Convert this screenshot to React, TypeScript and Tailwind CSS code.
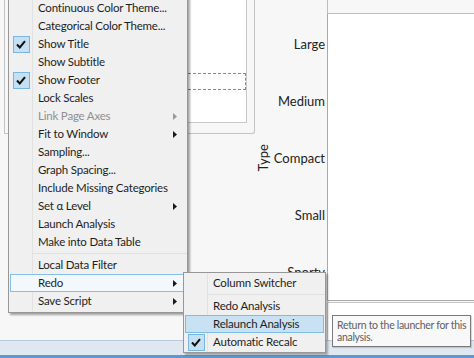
import React from "react";

type Item = {
  label?: string;
  checked?: boolean;
  disabled?: boolean;
  arrow?: boolean;
  hover?: boolean;
  sep?: boolean;
};

const mainItems: Item[] = [
  { label: "Continuous Color Theme..." },
  { label: "Categorical Color Theme..." },
  { label: "Show Title", checked: true },
  { label: "Show Subtitle" },
  { label: "Show Footer", checked: true },
  { label: "Lock Scales" },
  { label: "Link Page Axes", disabled: true, arrow: true },
  { label: "Fit to Window", arrow: true },
  { label: "Sampling..." },
  { label: "Graph Spacing..." },
  { label: "Include Missing Categories" },
  { label: "Set α Level", arrow: true },
  { label: "Launch Analysis" },
  { label: "Make into Data Table" },
  { sep: true },
  { label: "Local Data Filter" },
  { label: "Redo", arrow: true, hover: true },
  { label: "Save Script", arrow: true },
];

const subItems: Item[] = [
  { label: "Column Switcher" },
  { sep: true },
  { label: "Redo Analysis" },
  { label: "Relaunch Analysis", hover: true },
  { label: "Automatic Recalc", checked: true },
];

const categories = ["Large", "Medium", "Compact", "Small", "Sporty"];

function Check() {
  return (
    <svg width="10" height="9" viewBox="0 0 10 9">
      <path d="M1 4.5 L3.8 7.5 L9 1.2" fill="none" stroke="#111" strokeWidth="2" />
    </svg>
  );
}

function Arrow({ dim }: { dim?: boolean }) {
  return (
    <svg width="4" height="7" viewBox="0 0 4 7" className="absolute right-[8px] top-[5px]">
      <path d="M0 0 L4 3.5 L0 7 Z" fill={dim ? "#9a9a9a" : "#1a1a1a"} />
    </svg>
  );
}

function MenuRow({ item, mx }: { item: Item; mx: boolean }) {
  if (item.sep) {
    return (
      <div className="flex h-[5px] items-center pl-[24px]">
        <div className="h-px w-full bg-[#e0e0e0]" />
      </div>
    );
  }
  const hoverCls = item.hover
    ? mx
      ? "border border-[#86c0e8] bg-[#f3f8fc]"
      : "border border-[#7dbce6] bg-[#c8e2f3]"
    : "border border-transparent";
  return (
    <div className={`relative mx-[1px] flex h-[18px] items-center ${hoverCls}`}>
      <div className="flex h-full w-[20px] shrink-0 items-center justify-center">
        {item.checked && (
          <div className="flex h-[17px] w-[17px] items-center justify-center border border-[#79b6e4] bg-[#c4e0f2]">
            <Check />
          </div>
        )}
      </div>
      <span
        className={`pl-[7px] text-[11.5px] leading-none tracking-[-0.2px] whitespace-nowrap ${
          item.disabled ? "text-[#8f8f8f]" : "text-[#1e1e1e]"
        }`}
      >
        {item.label}
      </span>
      {item.arrow && <Arrow dim={item.disabled} />}
    </div>
  );
}

export default function App() {
  return (
    <div
      className="relative h-[358px] w-[474px] overflow-hidden bg-[#f7f7f7]"
      style={{ fontFamily: "Lato, 'Noto Sans', sans-serif" }}
    >
      {/* background report */}
      <div className="flex h-[340px]">
        <div className="flex w-[327px]">
          <div className="w-[255px] pl-[4px]">
            <div className="h-[134px] rounded-br-[3px] border-r border-b border-l border-[#c4c4c4] pr-[7px] pb-[10px] pl-[3px]">
              <div className="h-full border-r border-b border-[#c8c8c8] bg-white pt-[73px]">
                <div className="h-[17px] border border-dashed border-[#8a8a8a]" />
              </div>
            </div>
          </div>
          <div className="flex w-[72px] flex-col pt-[15px]">
            <div className="flex h-[285px]">
              <div className="flex w-[18px] items-center justify-center">
                <span className="-rotate-90 text-[13px] whitespace-nowrap text-[#222]">Type</span>
              </div>
              <div className="flex flex-1 flex-col pr-[2px]">
                {categories.map((c) => (
                  <div key={c} className="flex flex-1 items-center justify-end pt-[3px]">
                    <span className="text-[13px] whitespace-nowrap text-[#222]">{c}</span>
                  </div>
                ))}
              </div>
            </div>
          </div>
        </div>
        <div className="flex flex-1 flex-col">
          <div className="h-[14px] border-b border-l border-[#bdbdbd]" />
          <div className="h-[287px] border-b border-l border-[#a9a9a9] bg-white" />
          <div className="mt-[1px] flex-1 border-t border-l border-[#c8c8c8] bg-white" />
        </div>
      </div>
      <div className="h-[18px] border-t border-[#b9c9dc] bg-[#dfe7f1]">
        <div className="mt-[14px] h-[3px] bg-[#5d98d2]" />
      </div>

      {/* main context menu */}
      <div className="absolute top-[-3px] left-[8px] w-[180px] border border-[#979797] bg-[#f0f0f0] pt-[1px] pb-[2px] shadow-[2px_2px_2px_rgba(0,0,0,0.35)]">
        <div className="absolute top-0 bottom-0 left-[23px] w-px bg-[#e2e2e2]" />
        {mainItems.map((it, i) => (
          <MenuRow key={i} item={it} mx={true} />
        ))}
      </div>

      {/* Redo submenu */}
      <div className="absolute top-[272px] left-[183px] w-[143px] border border-[#979797] bg-[#f0f0f0] pt-[1px] pb-[1px] shadow-[2px_2px_2px_rgba(0,0,0,0.3)]">
        <div className="absolute top-0 bottom-0 left-[23px] w-px bg-[#e2e2e2]" />
        {subItems.map((it, i) => (
          <MenuRow key={i} item={it} mx={false} />
        ))}
      </div>

      {/* tooltip */}
      <div className="absolute top-[315px] left-[332px] border border-[#7a7a7a] bg-[#f8f8f8] px-[4px] py-[3px] text-[10.5px] leading-[12px] tracking-[-0.3px] whitespace-nowrap text-[#606060] shadow-[1px_1px_1px_rgba(0,0,0,0.15)]">
        Return to the launcher for this
        <br />
        analysis.
      </div>
    </div>
  );
}
